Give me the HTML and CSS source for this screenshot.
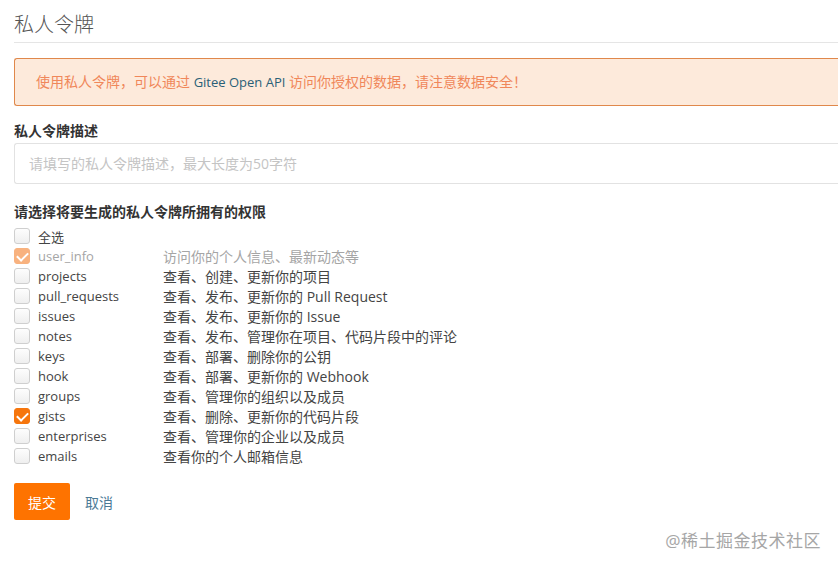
FILE: index.html
```html
<!DOCTYPE html>
<html lang="zh-CN">
<head>
  <meta charset="UTF-8">
  <title>私人令牌</title>
  <link rel="stylesheet" href="styles.css">
</head>
<body>
  <div class="page">
    <h2 class="title">私人令牌</h2>

    <div class="alert">
      使用私人令牌，可以通过 <span class="api">Gitee Open API</span> 访问你授权的数据，请注意数据安全！
    </div>

    <form class="token-form">
      <label class="field-label" for="desc">私人令牌描述</label>
      <input class="text-input" type="text" id="desc" placeholder="请填写的私人令牌描述，最大长度为50字符">

      <div class="field-label scopes-label">请选择将要生成的私人令牌所拥有的权限</div>
      <ul class="scopes">
        <li><span class="box"></span><span class="name">全选</span></li>
        <li class="disabled"><span class="box checked"></span><span class="name">user_info</span><span class="desc">访问你的个人信息、最新动态等</span></li>
        <li><span class="box"></span><span class="name">projects</span><span class="desc">查看、创建、更新你的项目</span></li>
        <li><span class="box"></span><span class="name">pull_requests</span><span class="desc">查看、发布、更新你的 Pull Request</span></li>
        <li><span class="box"></span><span class="name">issues</span><span class="desc">查看、发布、更新你的 Issue</span></li>
        <li><span class="box"></span><span class="name">notes</span><span class="desc">查看、发布、管理你在项目、代码片段中的评论</span></li>
        <li><span class="box"></span><span class="name">keys</span><span class="desc">查看、部署、删除你的公钥</span></li>
        <li><span class="box"></span><span class="name">hook</span><span class="desc">查看、部署、更新你的 Webhook</span></li>
        <li><span class="box"></span><span class="name">groups</span><span class="desc">查看、管理你的组织以及成员</span></li>
        <li><span class="box checked"></span><span class="name">gists</span><span class="desc">查看、删除、更新你的代码片段</span></li>
        <li><span class="box"></span><span class="name">enterprises</span><span class="desc">查看、管理你的企业以及成员</span></li>
        <li><span class="box"></span><span class="name">emails</span><span class="desc">查看你的个人邮箱信息</span></li>
      </ul>

      <div class="actions">
        <button type="button" class="btn-submit">提交</button>
        <a href="#" class="btn-cancel">取消</a>
      </div>
    </form>
  </div>

  <div class="watermark">@稀土掘金技术社区</div>
</body>
</html>
```

FILE: styles.css
```css
* {
  margin: 0;
  padding: 0;
  box-sizing: border-box;
}
html, body {
  overflow: hidden;
  height: 100%;
}
body {
  font-family: "Open Sans", "Noto Sans CJK SC", sans-serif;
  background: #fff;
  color: #333;
  position: relative;
}
.page {
  padding: 11px 0 0 14px;
}
.title {
  font-size: 20px;
  font-weight: 300;
  color: #555;
  line-height: 28px;
  padding-bottom: 3px;
  border-bottom: 1px solid #e5e5e5;
}
.alert {
  margin-top: 15px;
  height: 48px;
  padding: 0 21px;
  line-height: 46px;
  font-size: 14px;
  color: #f0875a;
  background: #fdeadb;
  border: 1px solid #e0884b;
  border-right: none;
  border-radius: 3px 0 0 3px;
}
.alert .api {
  color: #2a6077;
  font-size: 13px;
}
.field-label {
  display: block;
  font-size: 14px;
  font-weight: bold;
  color: #333;
  line-height: 20px;
  margin-top: 15px;
}
.text-input {
  display: block;
  width: 100%;
  height: 41px;
  margin-top: 2px;
  padding: 0 14px;
  border: 1px solid #e2e2e2;
  border-right: none;
  border-radius: 3px 0 0 3px;
  font-family: inherit;
  font-size: 14px;
  outline: none;
}
.text-input::placeholder {
  color: #c4c4c4;
}
.scopes-label {
  margin-top: 18px;
}
.scopes {
  list-style: none;
  margin-top: 4px;
}
.scopes li {
  display: flex;
  align-items: center;
  height: 20px;
  font-size: 13px;
  color: #444;
}
.box {
  width: 16px;
  height: 16px;
  border: 1px solid #cfcfcf;
  border-radius: 3px;
  background: linear-gradient(#fdfdfd, #efefef);
  flex-shrink: 0;
  position: relative;
}
.box.checked {
  background: #f6760d;
  border-color: #f6760d;
}
.box.checked::after {
  content: "";
  position: absolute;
  left: 4px;
  top: 1px;
  width: 5px;
  height: 9px;
  border: solid #fff;
  border-width: 0 2px 2px 0;
  transform: rotate(45deg);
}
.disabled .box.checked {
  background: #f8b27f;
  border-color: #f8b27f;
}
.disabled {
  color: #a5a5a5 !important;
}
.name {
  width: 125px;
  margin-left: 8px;
}
.desc {
  font-size: 14px;
}
.actions {
  display: flex;
  align-items: center;
  margin-top: 17px;
}
.btn-submit {
  width: 56px;
  height: 37px;
  background: #fe7300;
  color: #fff;
  border: none;
  border-radius: 2px;
  font-family: inherit;
  font-size: 14px;
}
.btn-cancel {
  margin-left: 15px;
  font-size: 14px;
  color: #4b7a96;
  text-decoration: none;
}
.watermark {
  position: absolute;
  right: 17px;
  top: 527px;
  font-size: 17px;
  color: #a6a6a6;
  letter-spacing: 0.5px;
}
```
